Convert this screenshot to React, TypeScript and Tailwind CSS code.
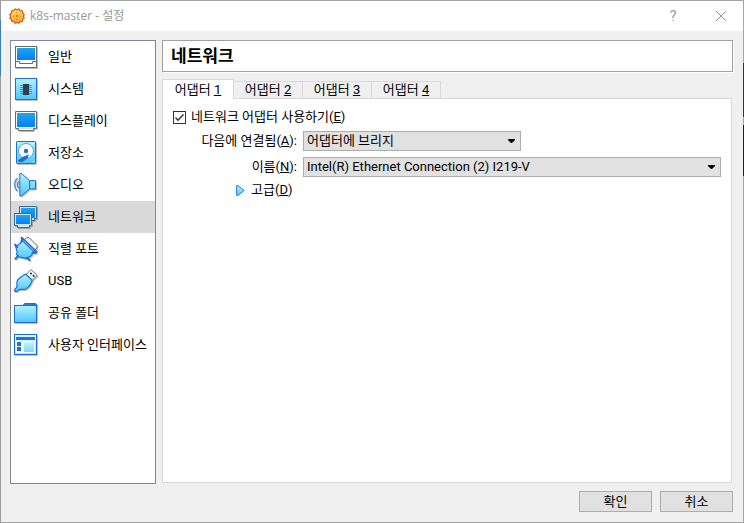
import { useState } from "react";
import type { ReactNode } from "react";

const blue = "#1f6fd0";

function Gradients() {
  return (
    <svg width="0" height="0" className="absolute" aria-hidden="true">
      <defs>
        <linearGradient id="screen" x1="0" y1="0" x2="0" y2="1">
          <stop offset="0" stopColor="#22a5e6" />
          <stop offset="1" stopColor="#0080ff" />
        </linearGradient>
        <linearGradient id="sky" x1="0" y1="0" x2="0" y2="1">
          <stop offset="0" stopColor="#b4f0ff" />
          <stop offset="1" stopColor="#4cc8ff" />
        </linearGradient>
        <linearGradient id="gear" x1="0" y1="0" x2="0" y2="1">
          <stop offset="0" stopColor="#ffe066" />
          <stop offset="1" stopColor="#ffa02c" />
        </linearGradient>
      </defs>
    </svg>
  );
}

function Icon({ children }: { children: ReactNode }) {
  return (
    <svg
      viewBox="0 0 24 24"
      className="size-6 shrink-0 overflow-visible drop-shadow-[1px_1px_0_#00000040]"
      fill="none"
      aria-hidden="true"
    >
      {children}
    </svg>
  );
}

const items: { label: string; icon: ReactNode }[] = [
  {
    label: "일반",
    icon: (
      <>
        <rect x="1.5" y="1.5" width="21" height="21" fill="#fff" stroke="#6b6b6b" />
        <rect x="3" y="3" width="18" height="12" fill="url(#screen)" />
        <path d="M1.5 16.5H5.5V18.5H18.5V16.5H22.5" stroke="#6b6b6b" />
      </>
    ),
  },
  {
    label: "시스템",
    icon: (
      <>
        <rect x="1.5" y="1.5" width="21" height="21" fill="url(#sky)" stroke={blue} />
        <path d="M6 8.5H18M6 10.5H18M6 12.5H18M6 14.5H18M6 16.5H18" stroke="#6f8791" />
        <rect x="9" y="7" width="6" height="11" fill="#333a48" />
      </>
    ),
  },
  {
    label: "디스플레이",
    icon: (
      <>
        <path d="M1.5 2.5H22.5V19.5H19.5V21.5H4.5V19.5H1.5Z" fill="#fff" stroke="#6b6b6b" />
        <rect x="3" y="4" width="18" height="14" fill="url(#screen)" />
        <path d="M5 19.5H19" stroke="#dcdcdc" />
      </>
    ),
  },
  {
    label: "저장소",
    icon: (
      <>
        <rect x="2.5" y="0.5" width="19" height="22" rx="0.6" fill="url(#sky)" stroke={blue} />
        <circle cx="12" cy="10" r="7.5" fill="#fff" stroke="#4aa6e4" />
        <circle cx="12" cy="10" r="2.2" fill={blue} />
        <path d="M15 13.5L9.5 15.5L4 19L4.6 21H8.5L13.5 17.5Z" fill={blue} />
        <path d="M5 2.5H4M20 2.5H19M20 20.5H19" stroke="#fff" />
      </>
    ),
  },
  {
    label: "오디오",
    icon: (
      <>
        <path d="M3.4 5.2C-.2 7.8-.2 15.4 3.4 18" stroke="#2c86dc" strokeWidth="1.1" />
        <path d="M5 8.2C2.8 10 2.8 13.6 5 15.2" stroke="#2c86dc" strokeWidth="1.1" />
        <path
          d="M5.8.6H7.6L15.6 7.6H21.5V16H15.6L7.6 22.8H5.8Z"
          fill="url(#sky)"
          stroke={blue}
          strokeLinejoin="round"
        />
        <path d="M15.6 7.6V16" stroke={blue} />
      </>
    ),
  },
  {
    label: "네트워크",
    icon: (
      <>
        <path d="M5.5 1.5H22.5V13.5H20.5V15.5H8V13.5H5.5Z" fill="#c9e9fb" stroke="#3d6890" />
        <rect x="7" y="3" width="14" height="10" fill="url(#screen)" />
        <path d="M.5 8.5H17.5V20.5H15.5V22.5H3.5V20.5H.5Z" fill="#c9e9fb" stroke="#3d6890" />
        <rect x="2" y="10" width="14" height="9" fill="url(#screen)" />
      </>
    ),
  },
  {
    label: "직렬 포트",
    icon: (
      <>
        <path
          d="M10.5 3L12.5.6H15L23 8.6V11L20.6 13Z"
          fill="#f7f7f7"
          stroke="#777"
          strokeLinejoin="round"
        />
        <path
          d="M8.2 3.4L20.6 15.4L18.2 16.4L17.6 18.6L12.4 21.6L7.4 20.4L5.2 20.2L2.4 17.4L3.2 15.2L1.6 9.4L6.4 6.2Z"
          fill="url(#sky)"
          stroke={blue}
          strokeWidth="1.2"
          strokeLinejoin="round"
        />
        <path
          d="M7.6.8L22.4 14.8M8.4 1.6L7.4 4.8M1 7.6L3.4 10M21.6 15.8L18.6 15.4M13 20.8L15.4 23M4 18.8L1.4 21.8"
          stroke={blue}
          strokeWidth="2"
          strokeLinecap="round"
        />
        <path d="M9.4 3.4L19.6 13.2" stroke="#8fdcff" strokeWidth="0.8" />
      </>
    ),
  },
  {
    label: "USB",
    icon: (
      <>
        <path d="M17 .5L23.2 6.3L18.4 11.2L12.2 5.4Z" fill="#fafafa" stroke="#777" strokeLinejoin="round" />
        <path d="M16.2 3.8L17.8 5.2M18.8 6.2L20.4 7.6" stroke="#333" strokeWidth="1.6" />
        <path
          d="M11.8 5.2C9.6 5.8 4.8 9.2 3.4 11.4C2.4 13.4 3.2 15.8 2.8 18.2L.8 20.4L.8 22.4L2.8 22.4L5 20.6C7 20 9.6 21 11.8 20C14.4 18.6 17.4 14.4 18.2 11.4Z"
          fill="url(#sky)"
          stroke={blue}
          strokeWidth="1.2"
          strokeLinejoin="round"
        />
      </>
    ),
  },
  {
    label: "공유 폴더",
    icon: (
      <>
        <path d="M8.5 5L10.5 2.5H21.5L22.8 4V6H8.5Z" fill="#2d79d8" stroke={blue} />
        <rect x="0.5" y="4.5" width="22" height="17" fill="url(#sky)" stroke={blue} />
      </>
    ),
  },
  {
    label: "사용자 인터페이스",
    icon: (
      <>
        <rect x="0.5" y="1.5" width="22" height="20" fill="#e9fbff" stroke={blue} />
        <path d="M1 2H22V21H1Z" fill="url(#sky)" fillOpacity="0.35" />
        <rect x="2" y="4" width="19" height="3" fill="#2d6fd8" />
        <rect x="2" y="8" width="19" height="12" fill="#f4fdff" />
        <rect x="3" y="9" width="4" height="4" fill={blue} />
        <rect x="3" y="14" width="4" height="4" fill={blue} />
        <rect x="10" y="9" width="10" height="10" fill="url(#sky)" fillOpacity="0.7" />
      </>
    ),
  },
];

function GearIcon() {
  return (
    <svg viewBox="0 0 16 16" className="size-4 shrink-0" aria-hidden="true">
      <path
        d="M6.2 1L8 1.8L9.8 1L11.2 2.6L13.4 2.8L13.6 5L15.2 6.4L14.4 8.2L15.2 10L13.6 11.4L13.4 13.4L11.2 13.6L9.8 15.2L8 14.4L6.2 15.2L4.8 13.6L2.8 13.4L2.4 11.4L.8 10L1.6 8.2L.8 6.4L2.4 5L2.8 2.8L4.8 2.6Z"
        fill="url(#gear)"
        stroke="#d85f1c"
        strokeWidth="1.3"
        strokeLinejoin="round"
      />
      <g fill="#c9621c">
        <circle cx="8" cy="8.1" r="1" />
        <circle cx="8" cy="4.8" r="0.6" />
        <circle cx="8" cy="11.4" r="0.6" />
        <circle cx="4.7" cy="8.1" r="0.6" />
        <circle cx="11.3" cy="8.1" r="0.6" />
      </g>
    </svg>
  );
}

function Combo({ id, options, className }: { id: string; options: string[]; className: string }) {
  return (
    <div className={`relative h-5 ${className}`}>
      <select
        id={id}
        className="block h-full w-full appearance-none border border-[#adadad] bg-[#e1e1e1] pr-6 pl-[3px] leading-4 outline-none"
      >
        {options.map((o) => (
          <option key={o}>{o}</option>
        ))}
      </select>
      <svg viewBox="0 0 7 4" className="pointer-events-none absolute top-2 right-[6px] h-1 w-[7px]" aria-hidden="true">
        <path d="M0 0H7V1L4 4H3L0 1Z" fill="#000" />
      </svg>
    </div>
  );
}

export default function App() {
  const [page, setPage] = useState(5);
  const [tab, setTab] = useState(1);
  const [enabled, setEnabled] = useState(true);

  return (
    <div className="flex min-h-screen font-['Roboto','Noto_Sans_CJK_KR',sans-serif] text-[13px] leading-4 text-black">
      <Gradients />
      <div className="w-px shrink-0 bg-[linear-gradient(#9c9c9c_20px,#3d7fb5_20px,#3d7fb5_76px,#9c9c9c_76px)]" />
      <div className="flex min-w-0 flex-1 flex-col border-y border-[#a5a5a5] bg-[#f0f0f0]">
        <header className="flex h-[30px] shrink-0 items-center bg-white pr-4 pl-2 text-[#999]">
          <GearIcon />
          <h1 className="ml-[5px] flex-1 font-['Open_Sans','Noto_Sans_CJK_KR',sans-serif] text-xs">
            k8s-master - 설정
          </h1>
          <button type="button" aria-label="도움말" className="mr-9 w-3 text-center text-sm">
            ?
          </button>
          <button type="button" aria-label="닫기">
            <svg viewBox="0 0 12 12" className="size-3" aria-hidden="true">
              <path d="M1 1L11 11M11 1L1 11" stroke="#929292" />
            </svg>
          </button>
        </header>

        <div className="flex flex-1 gap-[6px] px-[9px] pt-[9px]">
          <nav className="w-[146px] shrink-0 border border-[#828790] bg-white">
            <ul>
              {items.map((item, i) => (
                <li key={item.label}>
                  <button
                    type="button"
                    onClick={() => setPage(i)}
                    className={`flex h-8 w-full items-center gap-[10px] pl-[3px] text-left whitespace-nowrap ${
                      page === i ? "bg-[#d9d9d9]" : ""
                    }`}
                  >
                    <Icon>{item.icon}</Icon>
                    {item.label}
                  </button>
                </li>
              ))}
            </ul>
          </nav>

          <main className="flex min-w-0 flex-1 flex-col">
            <h2 className="mr-px flex h-8 items-center border border-[#a0a0a0] bg-white pl-2 text-[17px] font-bold shadow-[1px_1px_0_#fff]">
              네트워크
            </h2>

            <div role="tablist" className="mt-[7px] flex h-[19px] items-end">
              {[1, 2, 3, 4].map((n) => (
                <button
                  key={n}
                  type="button"
                  role="tab"
                  aria-selected={tab === n}
                  onClick={() => setTab(n)}
                  className={
                    tab === n
                      ? "relative -mb-px h-5 w-[72px] self-start border border-b-0 border-[#d9d9d9] bg-white"
                      : "h-[17px] w-[69px] border border-b-0 border-l-0 border-[#d9d9d9] bg-[#f0f0f0]"
                  }
                >
                  어댑터 <u>{n}</u>
                </button>
              ))}
            </div>

            <section role="tabpanel" className="mr-[2px] mb-px flex-1 border border-[#d9d9d9] bg-white px-[10px] pt-2">
              <div className="flex h-5 items-center gap-[5px]">
                <input
                  id="enable"
                  type="checkbox"
                  checked={enabled}
                  onChange={(e) => setEnabled(e.target.checked)}
                  className="peer size-[13px] appearance-none border border-[#333] bg-white"
                />
                <svg
                  viewBox="0 0 13 13"
                  className="pointer-events-none invisible -ml-[18px] size-[13px] peer-checked:visible"
                  aria-hidden="true"
                >
                  <path d="M2.5 6.5L5 9.2L10.5 3.4" fill="none" stroke="#333" strokeWidth="1.4" />
                </svg>
                <label htmlFor="enable">
                  네트워크 어댑터 사용하기(<u>E</u>)
                </label>
              </div>

              <div className="mt-1 grid grid-cols-[124px_1fr] items-center gap-x-[6px] gap-y-[6px]">
                <label htmlFor="attached" className="text-right whitespace-nowrap">
                  다음에 연결됨(<u>A</u>):
                </label>
                <Combo id="attached" className="w-[218px]" options={["어댑터에 브리지", "NAT", "내부 네트워크"]} />
                <label htmlFor="name" className="text-right whitespace-nowrap">
                  이름(<u>N</u>):
                </label>
                <Combo id="name" className="w-full" options={["Intel(R) Ethernet Connection (2) I219-V"]} />
              </div>

              <button type="button" className="mt-[5px] ml-[63px] flex items-center gap-[6px]">
                <svg viewBox="0 0 9 11" className="h-[11px] w-[9px]" aria-hidden="true">
                  <path d="M.6.6H2L8.2 5.5L2 10.4H.6Z" fill="url(#sky)" stroke="#1f80e0" strokeLinejoin="round" />
                </svg>
                <span>
                  고급(<u>D</u>)
                </span>
              </button>
            </section>
          </main>
        </div>

        <footer className="flex justify-end gap-2 px-[10px] pt-[7px] pb-[10px]">
          <button type="button" className="h-[21px] w-[73px] border border-[#adadad] bg-[#e1e1e1]">
            확인
          </button>
          <button type="button" className="h-[21px] w-[73px] border border-[#adadad] bg-[#e1e1e1]">
            취소
          </button>
        </footer>
      </div>
      <div className="w-px shrink-0 bg-[linear-gradient(#a5a5a5_63px,#333_63px,#333_117px,#a5a5a5_117px,#a5a5a5_125px,#222_125px,#222_176px,#a5a5a5_176px)]" />
    </div>
  );
}
